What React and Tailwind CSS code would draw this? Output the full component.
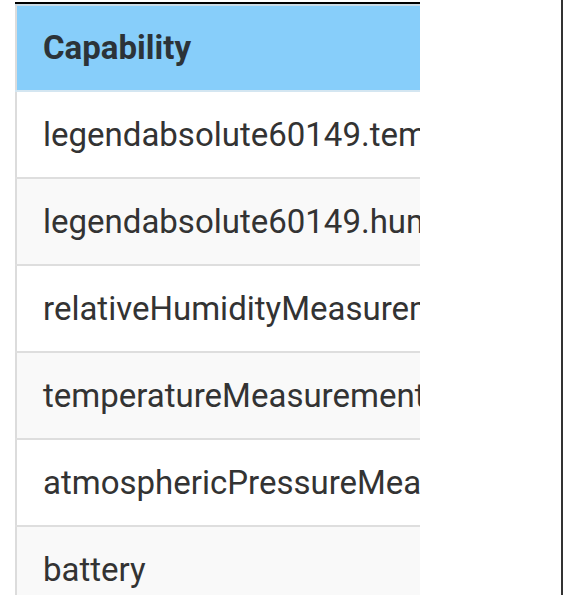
const ROWS = [
  "legendabsolute60149.temperatureMeasurement",
  "legendabsolute60149.humidityMeasurement",
  "relativeHumidityMeasurement",
  "temperatureMeasurement",
  "atmosphericPressureMeasurement",
  "battery",
];

export default function App() {
  return (
    <div className="w-[563px] h-[595px] overflow-hidden bg-white font-['Roboto',sans-serif] flex">
      <div className="flex-1 pl-[15px] pt-[2px]">
        <div className="w-[405px] overflow-hidden border-t-2 border-black">
          <table className="w-[900px] border-collapse border-l-2 border-[#dcdcdc] text-left">
            <thead>
              <tr className="bg-[#87cefa] border-t-2 border-[#c9dbe6] border-b-2 border-b-[#d4e6f1]">
                <th className="h-[86px] px-[26px] text-[33px] font-bold text-[#2c3338] align-middle">
                  Capability
                </th>
              </tr>
            </thead>
            <tbody>
              {ROWS.map((name, i) => (
                <tr
                  key={name}
                  className={
                    "border-b-2 border-[#dedede] " + (i % 2 === 1 ? "bg-[#f9f9f9]" : "bg-white")
                  }
                >
                  <td className="h-[87px] px-[26px] text-[33px] text-[#333333] align-middle whitespace-nowrap">
                    {name}
                  </td>
                </tr>
              ))}
            </tbody>
          </table>
        </div>
      </div>
      <div className="w-[2px] h-full bg-[#333333]" />
    </div>
  );
}
